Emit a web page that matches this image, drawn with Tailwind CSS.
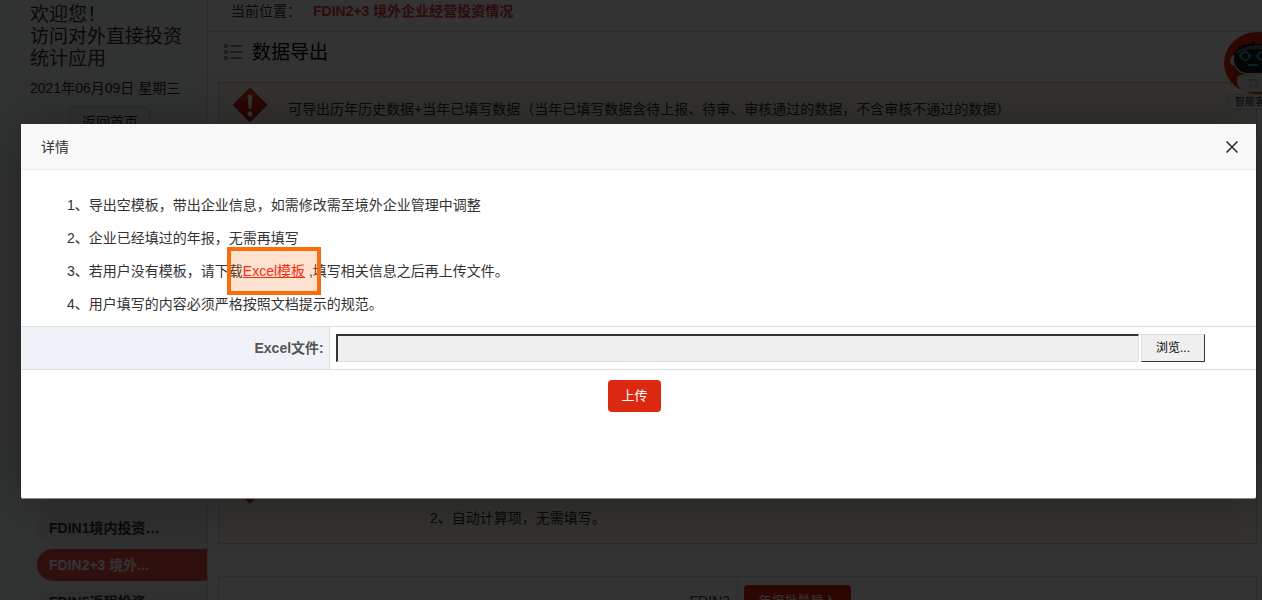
<!DOCTYPE html>
<html lang="zh-CN">
<head>
<meta charset="utf-8">
<meta name="viewport" content="width=device-width, initial-scale=1">
<title>数据导出</title>
<script src="https://cdn.jsdelivr.net/npm/@tailwindcss/browser@4"></script>
</head>
<body class="relative h-screen overflow-hidden bg-white font-['Liberation_Sans','Noto_Sans_CJK_SC',sans-serif] text-sm text-[#333]">
<div class="flex h-full">
  <!-- Sidebar -->
  <aside class="flex w-52 shrink-0 flex-col border-r border-[#ddd] bg-[#f6f8f8] pl-[21px]">
    <div class="border-l border-[#eee] pl-2">
      <p class="pt-1 text-[19px] leading-[22px]">欢迎您！<br>访问对外直接投资<br>统计应用</p>
      <p class="mt-[6px] leading-6">2021年06月09日 星期三</p>
      <button type="button" class="mt-[7px] ml-10 h-8 w-20 rounded border border-[#ccc] pb-[2px]">返回首页</button>
    </div>
    <nav class="mt-[373px] flex flex-1 flex-col gap-[5px] border-l border-[#eee] pl-[15px] font-bold">
      <a href="#" class="h-8 shrink-0 rounded-l-full bg-[#eff0f0] pl-3 leading-8">FDIN1境内投资…</a>
      <a href="#" class="h-8 shrink-0 rounded-l-full bg-[#f0504a] pl-3 leading-8 text-white">FDIN2+3 境外...</a>
      <a href="#" class="h-8 shrink-0 rounded-l-full bg-[#eff0f0] pl-3 leading-8">FDIN5返程投资…</a>
    </nav>
  </aside>

  <!-- Page content -->
  <main class="flex min-w-0 flex-1 flex-col">
    <div class="flex h-8 shrink-0 gap-3 border-b border-[#ddd] pl-[23px] leading-[22px]">
      <span>当前位置：</span><strong class="text-[#e03c38]">FDIN2+3 境外企业经营投资情况</strong>
    </div>
    <h1 class="flex h-[50px] shrink-0 items-center gap-2 pb-2 pl-4 text-[19px] text-black">
      <svg class="h-5 w-5" viewBox="0 0 20 20" fill="#999" aria-hidden="true"><path d="M0 1h4v4H0zM0 7h4v4H0zM0 13h4v4H0zM6 2h13v2H6zM6 8h13v2H6zM6 14h13v2H6z"/></svg>
      数据导出
    </h1>
    <div class="mr-[5px] ml-[10px] flex flex-1 flex-col">
      <section class="flex h-14 shrink-0 items-start gap-5 border border-[#d9c9a8] bg-[#fffae8] pt-1 pl-[13px]">
        <svg class="h-9 w-9" viewBox="0 0 36 36" aria-hidden="true"><defs><linearGradient id="warn" x2="0" y2="1"><stop stop-color="#ee3a35"/><stop offset="1" stop-color="#c10a10"/></linearGradient></defs><path d="M18 1 35 18 18 35 1 18Z" fill="url(#warn)" stroke="#c92020"/><path d="M15.500 9q2.500-3 5 0l-1.300 13h-2.400Z" fill="#fff"/><circle cx="18" cy="27" r="2.500" fill="#fff"/></svg>
        <p class="pt-[10px] leading-6">可导出历年历史数据+当年已填写数据（当年已填写数据含待上报、待审、审核通过的数据，不含审核不通过的数据）</p>
      </section>
      <section class="mt-3 flex h-[394px] shrink-0 items-end border border-[#e6ceb4] bg-[#fffae8] pb-[13px] pl-[13px]">
        <svg class="mb-[26px] h-9 w-9" viewBox="0 0 36 36" aria-hidden="true"><path d="M18 1 35 18 20 34q-2 2-4 0L1 18Z" fill="#e01820"/></svg>
        <p class="ml-[162px] leading-6">2、自动计算项，无需填写。</p>
      </section>
      <table class="mt-8 w-full border border-[#ddd]">
        <tbody><tr>
          <th scope="row" class="w-1/2 border-r border-[#ddd] pt-2 pr-[7px] text-right font-normal">FDIN3</th>
          <td class="pt-2 pl-[6px]"><button type="button" class="h-8 w-[107px] rounded bg-[#d92409] text-[13px] text-white">年报批量导入</button></td>
        </tr></tbody>
      </table>
    </div>
  </main>
</div>

<!-- Floating support assistant, partly beyond the window's edge -->
<a href="#" class="absolute top-[30px] -right-8 flex w-[72px] flex-col items-center" aria-label="智能客服">
  <svg class="h-[64px] w-[72px] shrink-0" viewBox="0 0 72 64">
    <ellipse cx="36" cy="33" rx="34" ry="31" fill="#df2409"/>
    <path d="M16 46q3-2 22-2t22 2q-2 11-10 16H22q-10-7-6-16Z" fill="#e5e5e5"/>
    <path d="M17 23q-9 2-9 8 0 4 5 5 2 6 9 7L19 28Z" fill="#e5e5e5"/>
    <path d="M31 13V17" stroke="#222" stroke-width="3" stroke-linecap="round"/>
    <rect x="12" y="14" width="46" height="31" rx="15" fill="#ddd"/>
    <rect x="12" y="14" width="46" height="29" rx="14" fill="#17191c"/>
    <path d="M15 24q17-10 40 0v-3q-18-12-40 0Z" fill="#666"/>
    <g fill="none" stroke="#20aadd" stroke-width="2"><circle cx="23" cy="26" r="4"/><path d="M17 26h2m8 0h2"/><circle cx="40" cy="26" r="4"/><path d="M34 26h2m8 0h2"/><path d="M26 35h10"/></g>
    <g fill="#aaa"><circle cx="29" cy="50" r="1.500"/><circle cx="34" cy="50" r="1.500"/><circle cx="29" cy="56" r="1.500"/><circle cx="34" cy="56" r="1.500"/></g>
  </svg>
  <span class="w-16 rounded-full border border-[#ccc] bg-[#f3f3f3] pl-2 text-[10px] leading-[14px] whitespace-nowrap">智能客服</span>
</a>

<div class="absolute inset-0 bg-black/80"></div>

<!-- Details dialog -->
<section role="dialog" aria-labelledby="dialog-title" class="absolute top-[124px] right-[6px] left-[21px] min-h-[375px] rounded-[2px] border-b border-[#888] bg-white shadow-[1px_1px_50px_rgba(0,0,0,0.3)]">
  <header class="flex h-[46px] items-center justify-between border-b border-[#eee] bg-[#f8f8f8] pr-[17px] pl-5">
    <h2 id="dialog-title">详情</h2>
    <button type="button" aria-label="关闭"><svg class="h-[14px] w-[14px]" viewBox="0 0 14 14" fill="none" stroke="#2e2d3c" stroke-width="1.600"><path d="m1.500 1.500 11 11m0-11-11 11"/></svg></button>
  </header>
  <ol class="pt-[19px] pb-[5px] pl-[46px] leading-[33px]">
    <li>1、导出空模板，带出企业信息，如需修改需至境外企业管理中调整</li>
    <li>2、企业已经填过的年报，无需再填写</li>
    <li>3、若用户没有模板，请下载<span class="relative"><a href="#" class="text-[#f21d12] underline">Excel模板</a><span class="pointer-events-none absolute -inset-x-4 -top-4 -bottom-4 border-4 border-[#f96b0b] bg-[#f96b0b]/20"></span></span> ,填写相关信息之后再上传文件。</li>
    <li>4、用户填写的内容必须严格按照文档提示的规范。</li>
  </ol>
  <form>
    <div class="flex h-11 border-y border-[#ddd]">
      <label for="excel-file" class="flex w-1/4 items-center justify-end border-r border-[#ddd] bg-[#eff3f7] pr-[5px] font-bold text-[#555]">Excel文件:</label>
      <div class="flex flex-1 items-center gap-[2px] pr-[51px] pl-[6px]">
        <input id="excel-file" type="text" readonly class="h-7 min-w-0 flex-1 border-t-2 border-r border-b border-l-2 border-t-[#333] border-r-[#ddd] border-b-[#ddd] border-l-[#333] bg-[#f0f0f0] px-1">
        <button type="button" class="h-7 w-16 border border-t-[#ddd] border-r-[#333] border-b-[#333] border-l-[#ddd] bg-[#f0f0f0] text-xs text-black">浏览...</button>
      </div>
    </div>
    <div class="flex justify-center pt-[10px] pr-2">
      <button type="submit" class="h-8 w-[53px] rounded bg-[#db2810] text-[13px] text-white">上传</button>
    </div>
  </form>
</section>
</body>
</html>
